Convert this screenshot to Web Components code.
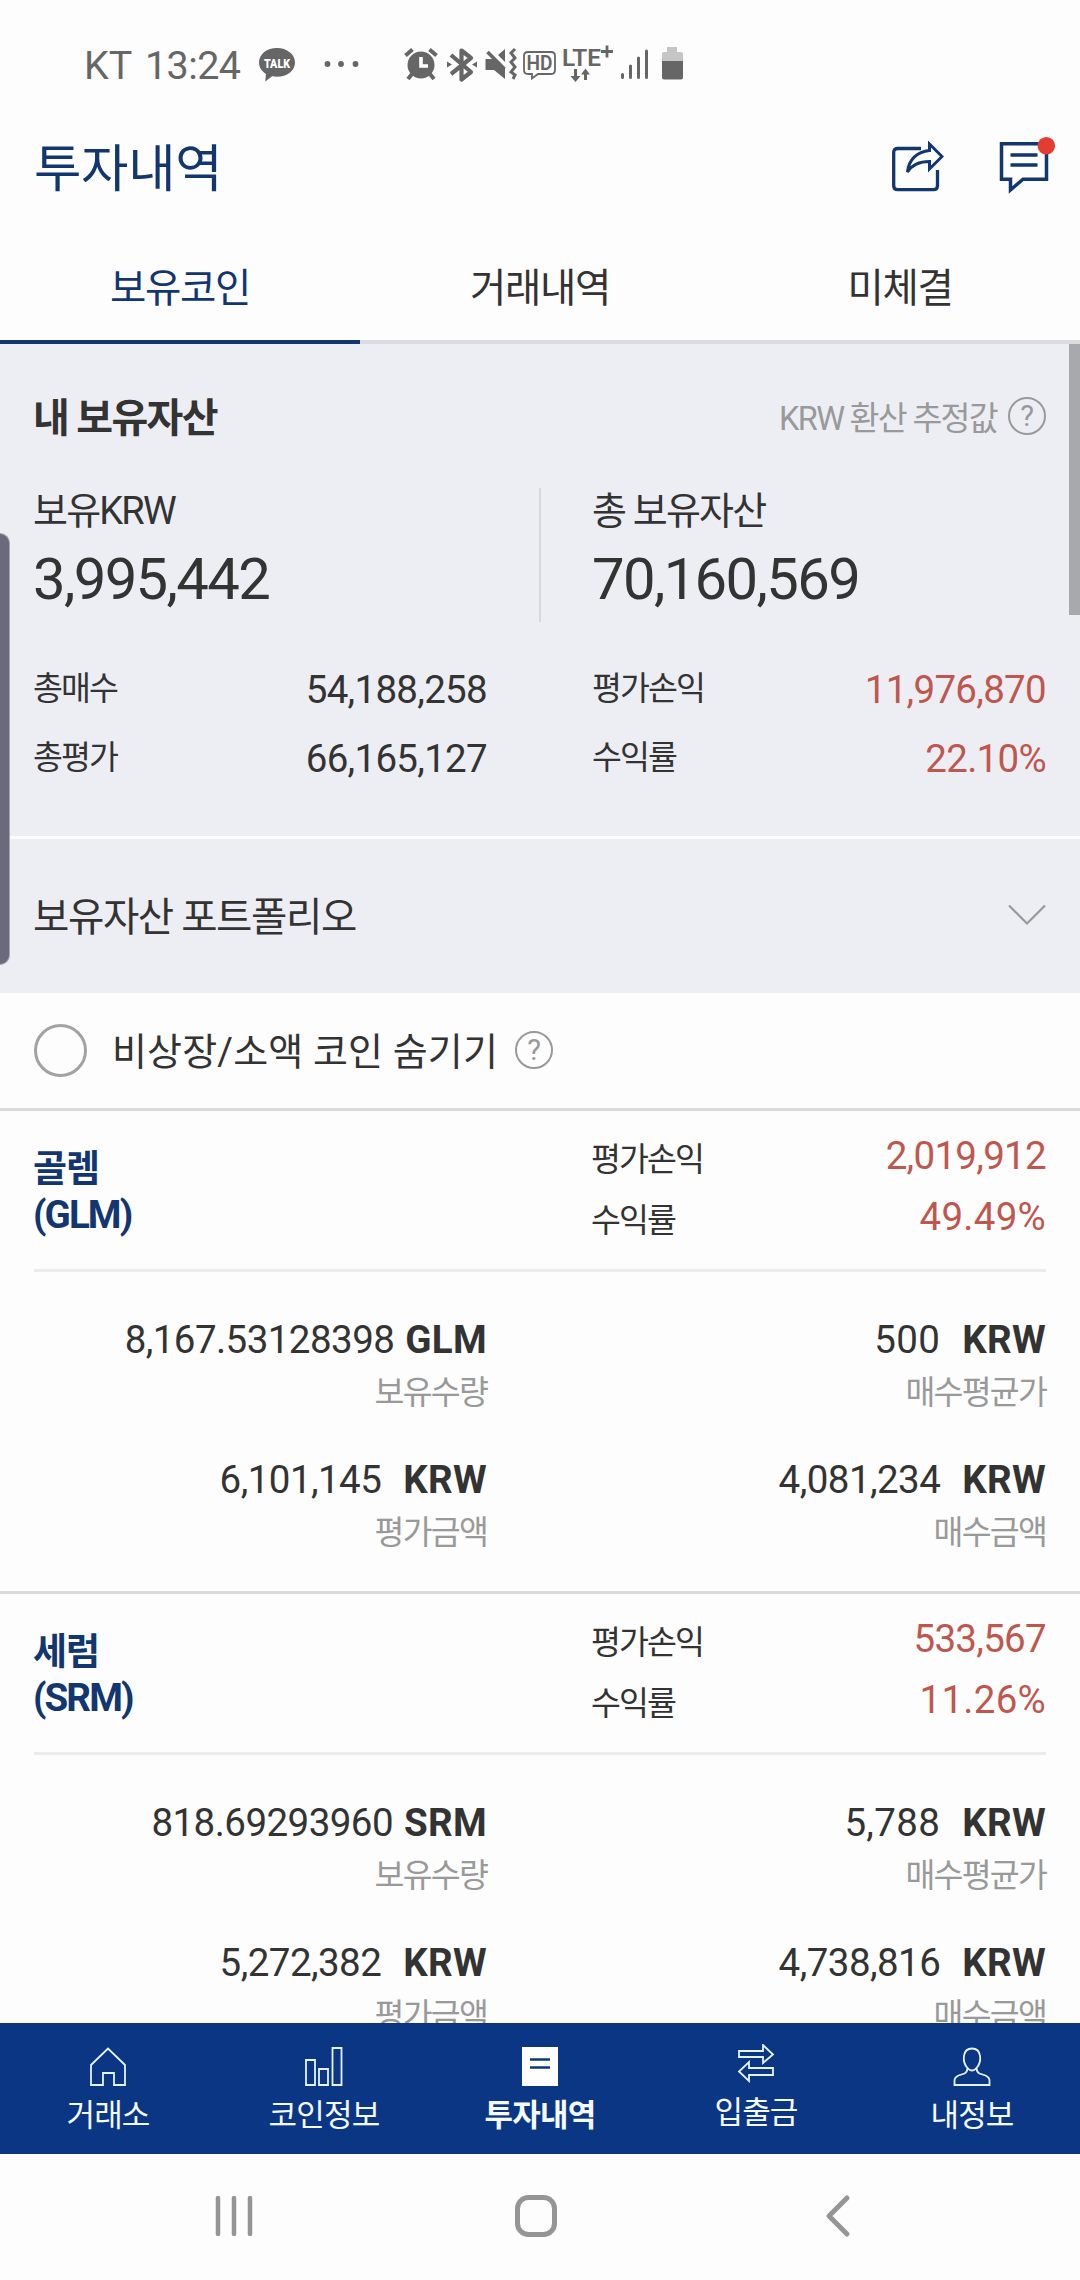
<!DOCTYPE html>
<html lang="ko">
<head>
<meta charset="UTF-8">
<title>투자내역</title>
<style>
    html, body {
        margin: 0;
        padding: 0;
    }

    body {
        width: 1080px;
        height: 2280px;
        overflow: hidden;
        background: #fdfdfd;
        color: #333;
        font-family: Roboto, "Noto Sans CJK KR", sans-serif;
        --navy: #12366f;
        --red: #c0574f;
        --gray: #999;
        --panel: #edeef4;
    }
</style>
</head>
<body>
<wallet-app></wallet-app>

<script>
// Base class: puts the markup of render() in an open shadow root
class BaseElement extends HTMLElement {
    constructor() {
        super();
        this.shadow = this.attachShadow({ mode: 'open' });
    }

    connectedCallback() {
        this.shadow.innerHTML = this.render();
    }
}

class StatusBar extends BaseElement {
    render() {
        return /*html*/ `
            <style>
                :host {
                    display: flex;
                    align-items: center;
                    height: 110px;
                    padding: 20px 0 0 84px;
                    box-sizing: border-box;
                    color: #666;
                    font-size: 39.5px;
                    line-height: 90px;
                }
                .carrier { width: 61px; margin-top: 2px; }
                .time { width: 113px; margin-top: 2px; letter-spacing: -0.6px; }
                svg { display: block; height: 40px; }
                .icons { font-family: Roboto, sans-serif; }
            </style>
            <span class="carrier">KT</span>
            <span class="time">13:24</span>
            <svg class="icons" width="432" height="40" viewBox="258 45 432 40" fill="#666">
                <!-- talk bubble -->
                <path d="M277 48c-10 0-18 6-18 14.5 0 5 3 9 7 11.500l-.8 7.500 7-5.200c1.500.3 3.200.5 4.800.5 10 0 18-6 18-14.300S287 48 277 48z"/>
                <text x="277" y="67.500" font-size="12.500" font-weight="900" fill="#fff" text-anchor="middle" textLength="26" lengthAdjust="spacingAndGlyphs">TALK</text>
                <circle cx="327.500" cy="64" r="2.900"/><circle cx="341" cy="64" r="2.900"/><circle cx="355.500" cy="64" r="2.900"/>
                <!-- alarm -->
                <circle cx="421" cy="65" r="13.500"/>
                <path d="M405.500 55.500l7-6M436.500 55.500l-7-6" fill="none" stroke="#666" stroke-width="4"/>
                <path d="M421 57v9h7" fill="none" stroke="#fff" stroke-width="3.600"/>
                <path d="M412 74l-4 5M430 74l4 5" stroke="#666" stroke-width="4"/>
                <!-- bluetooth -->
                <path d="M451 55l20 17-9.500 7.500V50.500l9.500 7.500-20 16" fill="none" stroke="#666" stroke-width="4.200" stroke-linejoin="round"/>
                <path d="M447 61.500l5 3-5 3zM477 61.500l-5 3 5 3z"/>
                <!-- muted speaker -->
                <path d="M485.500 59h8l11.500 9v11l-11-9h-8.500zM498 55l7-6v13z"/>
                <path d="M487.500 52l17 17" stroke="#666" stroke-width="3.500"/>
                <path d="M515 49l-4 4 4 5-4 4 4 5-4 5 4 3-2 4" fill="none" stroke="#666" stroke-width="3"/>
                <!-- HD voice -->
                <path d="M528 52h23q4 0 4 4v14q0 4-4 4h-13l-6 4.500v-4.500h-4q-4 0-4-4v-14q0-4 4-4z" fill="none" stroke="#666" stroke-width="1.800"/>
                <text x="539.500" y="70" font-size="20" font-weight="600" text-anchor="middle" textLength="26" lengthAdjust="spacingAndGlyphs">HD</text>
                <!-- LTE+ -->
                <text x="562" y="65.500" font-size="23.500" font-weight="600" textLength="39" lengthAdjust="spacingAndGlyphs">LTE</text>
                <path d="M601 51.500h12M607 45.500v12" stroke="#666" stroke-width="2.800"/>
                <path d="M574 69h3v7h3.500l-5 6-5-6h3.500zM584 80h3v-5.500h3l-4.500-6-4.500 6h3z"/>
                <!-- signal -->
                <path d="M622.500 74.500v3M630.500 66v11.500M638.500 58v19.500M646.500 51v26.500" stroke="#666" stroke-width="3" stroke-linecap="round"/>
                <!-- battery -->
                <path d="M667 47h10v5h4q2 0 2 2v8h-21v-8q0-2 2-2h3z" fill="#c5c5c5"/>
                <path d="M662 61h21v16.500q0 2-2 2h-17q-2 0-2-2z"/>
            </svg>
        `;
    }
}

class PageHeader extends BaseElement {
    render() {
        return /*html*/ `
            <style>
                :host {
                    display: flex;
                    align-items: center;
                    height: 118px;
                    padding: 0 22px 0 34px;
                    box-sizing: border-box;
                    color: var(--navy);
                }
                .title {
                    flex-grow: 1;
                    margin-top: 2px;
                    font-size: 51.5px;
                    line-height: 118px;
                    letter-spacing: -0.3px;
                }
                .share { margin: -4px 54px 0 0; }
                .chat { margin-top: -6px; }
            </style>
            <span class="title"><slot></slot></span>
            <svg class="share" width="52" height="52" viewBox="0 0 52 52" fill="none" stroke="#12366f" stroke-width="3.300">
                <path d="M29 7.500H5.700q-4 0-4 4v33.200q0 4 4 4h35.800q4 0 4-4V29"/>
                <path d="M37.500 3L50 15.500 37.500 28v-7.500C27.500 20.500 20.500 23 15.500 31 16.500 19 25 10.500 37.500 9.500z" stroke-width="3"/>
            </svg>
            <svg class="chat" width="60" height="60" viewBox="0 0 60 60" fill="none" stroke="#12366f" stroke-width="3.500">
                <path d="M3.500 7.700h45v35.500H25L12.500 54V43.200h-9zM12.500 19h27M12.500 29h27"/>
                <circle cx="48.300" cy="9.700" r="8.800" fill="#e53c32" stroke="none"/>
            </svg>
        `;
    }
}

class TabBar extends BaseElement {
    constructor() {
        super();
        this.tabs = ['보유코인', '거래내역', '미체결'];
    }

    render() {
        return /*html*/ `
            <style>
                :host {
                    display: flex;
                    height: 116px;
                }
                .tab {
                    flex: 1;
                    border-bottom: 4px solid #dcdce0;
                    text-align: center;
                    font-size: 39.5px;
                    line-height: 121px;
                    letter-spacing: -1.3px;
                }
                .active {
                    color: var(--navy);
                    border-color: var(--navy);
                }
            </style>
            ${this.tabs.map((tab, index) => `<div class="tab ${index === 0 ? 'active' : ''}">${tab}</div>`).join('')}
        `;
    }
}

class HelpIcon extends BaseElement {
    render() {
        return /*html*/ `
            <style>
                :host { display: block; width: 38px; height: 38px; }
                div {
                    box-sizing: border-box;
                    width: 38px;
                    height: 38px;
                    border: 2px solid #999;
                    border-radius: 50%;
                    color: #999;
                    font-size: 29px;
                    line-height: 35px;
                    text-align: center;
                    letter-spacing: 0;
                }
            </style>
            <div>?</div>
        `;
    }
}

class StatRow extends BaseElement {
    render() {
        const up = this.hasAttribute('up');
        return /*html*/ `
            <style>
                :host {
                    display: flex;
                    justify-content: space-between;
                    height: var(--row-height, 69px);
                    line-height: var(--row-height, 69px);
                }
                .label { font-size: 32.5px; letter-spacing: -1.9px; margin: 1px 0 0 -1px; }
                .value {
                    font-size: 38.5px;
                    letter-spacing: var(--value-spacing, -0.7px);
                    margin: var(--value-shift, 1px) 0 0 0;
                    color: ${up ? 'var(--red)' : 'inherit'};
                }
            </style>
            <span class="label">${this.getAttribute('label')}</span>
            <span class="value"><slot></slot></span>
        `;
    }
}

class AssetSummary extends BaseElement {
    render() {
        return /*html*/ `
            <style>
                :host {
                    display: block;
                    height: 492px;
                    padding: 44px 34px 0;
                    box-sizing: border-box;
                    background: var(--panel);
                }
                .head {
                    display: flex;
                    align-items: center;
                    height: 60px;
                    line-height: 60px;
                }
                .head b { flex-grow: 1; font-size: 40px; font-weight: 700; letter-spacing: -1.7px; margin: 2px 0 0 -1px; }
                .note { font-size: 32.5px; color: var(--gray); letter-spacing: -1.7px; margin: 1px 11px 0 0; }
                help-icon { margin-top: -4px; }
                .totals {
                    display: grid;
                    grid-template-columns: 506px 1fr;
                    height: 134px;
                    margin-top: 40px;
                }
                .total { margin-left: -1px; }
                .total + .total { border-left: 2px solid #d8d9de; padding-left: 51px; }
                .total span { display: block; font-size: 38px; line-height: 46px; letter-spacing: -1.8px; }
                .total strong { display: block; font-weight: 400; font-size: 58px; line-height: 70px; letter-spacing: -1.65px; margin-top: 10px; }
                .stats {
                    display: grid;
                    grid-template-columns: 453px 453px;
                    justify-content: space-between;
                    margin-top: 32px;
                }
            </style>
            <div class="head">
                <b>내 보유자산</b>
                <span class="note">KRW 환산 추정값</span>
                <help-icon></help-icon>
            </div>
            <div class="totals">
                <div class="total"><span>보유KRW</span><strong>3,995,442</strong></div>
                <div class="total"><span>총 보유자산</span><strong>70,160,569</strong></div>
            </div>
            <div class="stats">
                <stat-row label="총매수">54,188,258</stat-row>
                <stat-row label="평가손익" up>11,976,870</stat-row>
                <stat-row label="총평가">66,165,127</stat-row>
                <stat-row label="수익률" up>22.10%</stat-row>
            </div>
        `;
    }
}

class PortfolioToggle extends BaseElement {
    render() {
        return /*html*/ `
            <style>
                :host {
                    display: flex;
                    align-items: center;
                    justify-content: space-between;
                    height: 154px;
                    margin-top: 3px;
                    padding: 0 34px;
                    background: var(--panel);
                    font-size: 39.5px;
                    line-height: 154px;
                    letter-spacing: -1.4px;
                }
                span { margin: 3px 0 0 -1px; }
                svg { margin-top: -3px; }
            </style>
            <span><slot></slot></span>
            <svg width="38" height="22" viewBox="0 0 38 22" fill="none" stroke="#999" stroke-width="2.200">
                <path d="M1 1.500l18 18 18-18"/>
            </svg>
        `;
    }
}

class HideFilter extends BaseElement {
    render() {
        return /*html*/ `
            <style>
                :host {
                    display: flex;
                    align-items: center;
                    height: 115px;
                    padding-left: 34px;
                    border-bottom: 3px solid #dadada;
                    font-size: 38px;
                    line-height: 118px;
                }
                .radio {
                    width: 47px;
                    height: 47px;
                    border: 3px solid #a2a2a2;
                    border-radius: 50%;
                }
                .label { margin: 3px 17px 0 25px; letter-spacing: 0.15px; }
                .radio, help-icon { margin-top: -1px; }
            </style>
            <span class="radio"></span>
            <span class="label"><slot></slot></span>
            <help-icon></help-icon>
        `;
    }
}

class CoinCard extends BaseElement {
    render() {
        const get = name => this.getAttribute(name);
        const cells = [
            { value: get('amount'), unit: get('symbol'), label: '보유수량' },
            { value: get('average'), unit: 'KRW', label: '매수평균가', wide: true },
            { value: get('valuation'), unit: 'KRW', label: '평가금액' },
            { value: get('cost'), unit: 'KRW', label: '매수금액' },
        ];
        return /*html*/ `
            <style>
                :host {
                    display: block;
                    padding: 0 34px;
                    border-bottom: 3px solid #dadada;
                }
                .head {
                    display: grid;
                    grid-template-columns: 1fr 454px;
                    height: 158px;
                    border-bottom: 3px solid #ececec;
                }
                .name {
                    padding-top: 36px;
                    margin-left: -1px;
                    color: var(--navy);
                    font-size: 37px;
                    font-weight: 700;
                    line-height: 46px;
                    letter-spacing: -1.1px;
                }
                .name div + div { font-size: 38.5px; line-height: 44px; letter-spacing: -1.9px; }
                .profit { padding-top: 18px; --row-height: 61px; --value-shift: -4px; }
                .rate { --value-spacing: 0.25px; }
                .body {
                    display: grid;
                    grid-template-columns: 453px 1fr;
                    height: 276px;
                    padding-top: 43px;
                    grid-auto-rows: 140px;
                    text-align: right;
                }
                .value { font-size: 38.5px; line-height: 50px; letter-spacing: -0.55px; white-space: pre; }
                .value.wide { letter-spacing: 0.35px; }
                .value b { font-weight: 700; letter-spacing: 0.3px; margin-left: 22px; }
                .value b.coin { margin-left: 11px; }
                .label { font-size: 32.5px; line-height: 40px; margin-top: 8px; color: var(--gray); letter-spacing: -1.8px; }
            </style>
            <div class="head">
                <div class="name"><div>${get('name')}</div><div>(${get('symbol')})</div></div>
                <div class="profit">
                    <stat-row label="평가손익" up>${get('profit')}</stat-row>
                    <stat-row class="rate" label="수익률" up>${get('rate')}</stat-row>
                </div>
            </div>
            <div class="body">
                ${cells.map(cell => `
                    <div>
                        <div class="value ${cell.wide ? 'wide' : ''}">${cell.value}<b class="${cell.unit === 'KRW' ? '' : 'coin'}">${cell.unit}</b></div>
                        <div class="label">${cell.label}</div>
                    </div>
                `).join('')}
            </div>
        `;
    }
}

class BottomNav extends BaseElement {
    constructor() {
        super();
        this.items = [
            { title: '거래소', icon: '<path d="M2 38V18L19 1.500 36 18v20H25V26H14v12z"/>' },
            { title: '코인정보', icon: '<path d="M1 13h9v25H1zM14 22h9v16h-9zM27.500 1h9v37h-9z"/>' },
            { title: '투자내역', icon: '<path d="M1 0h36v39H1z" fill="#fff" stroke="none"/><path d="M9 12.500h20M9 20.500h20" stroke="#0a3684" stroke-width="2.500"/>', active: true },
            { title: '입출금', icon: '<path d="M2 7h24V1l10 9.500L26 19v-6H2zM36 24H12v-6L2 27.500 12 37v-6h24z"/>', shift: true },
            { title: '내정보', icon: '<path d="M14.500 21C9 15 9 1.500 19 1.500S29 15 23.500 21q0 4 3 5.500l6 2q4 2 4 5V38h-35v-4.500q0-3 4-5l6-2q3-1.500 3-5.500zM14.500 21q4.500 5 9 0"/>' },
        ];
    }

    render() {
        return /*html*/ `
            <style>
                :host {
                    display: flex;
                    height: 131px;
                    background: #0a3684;
                    color: #f4faff;
                    z-index: 1;
                }
                .item {
                    flex: 1;
                    display: flex;
                    flex-direction: column;
                    align-items: center;
                    padding-top: 24px;
                    font-size: 31px;
                    line-height: 44px;
                    letter-spacing: -0.8px;
                }
                .item span { margin-top: 8px; }
                .shift { padding-top: 21px; }
                .active { font-weight: 700; }
            </style>
            ${this.items.map(item => `
                <div class="item ${item.active ? 'active' : ''} ${item.shift ? 'shift' : ''}">
                    <svg width="38" height="39" viewBox="0 0 38 39" fill="none" stroke="#e6f3ff" stroke-width="1.800">${item.icon}</svg>
                    <span>${item.title}</span>
                </div>
            `).join('')}
        `;
    }
}

class SystemNav extends BaseElement {
    render() {
        return /*html*/ `
            <style>
                :host {
                    display: flex;
                    align-items: center;
                    height: 126px;
                    padding: 0 229px 0 214px;
                    box-sizing: border-box;
                    justify-content: space-between;
                }
                svg { display: block; margin-top: -2px; }
                .home { margin-right: 8px; }
            </style>
            <svg width="40" height="44" viewBox="0 0 40 44" stroke="#959595" stroke-width="4.500" stroke-linecap="round">
                <path d="M4 4v36M20 4v36M36 4v36"/>
            </svg>
            <svg class="home" width="44" height="44" viewBox="0 0 44 44" fill="none" stroke="#959595" stroke-width="5">
                <rect x="3.500" y="3.500" width="37" height="37" rx="11"/>
            </svg>
            <svg width="26" height="44" viewBox="0 0 26 44" fill="none" stroke="#959595" stroke-width="5" stroke-linecap="round" stroke-linejoin="round">
                <path d="M22 4L4 22l18 18"/>
            </svg>
        `;
    }
}

class WalletApp extends BaseElement {
    render() {
        return /*html*/ `
            <style>
                :host {
                    display: flex;
                    flex-direction: column;
                    width: 1080px;
                    height: 2280px;
                    position: relative;
                }
                main {
                    height: 1679px;
                    overflow: hidden;
                    position: relative;
                }
                /* scroll thumb and edge panel handle float over the page */
                .thumb {
                    position: absolute;
                    top: 0;
                    right: 0;
                    width: 11px;
                    height: 271px;
                    background: #a8a9ad;
                }
                .handle {
                    position: absolute;
                    left: 0;
                    top: 533px;
                    width: 9px;
                    height: 430px;
                    border: 1px solid #a5a5b0;
                    border-left: 0;
                    border-radius: 0 11px 11px 0;
                    background: #6b697c;
                }
            </style>
            <status-bar></status-bar>
            <page-header>투자내역</page-header>
            <tab-bar></tab-bar>
            <main>
                <asset-summary></asset-summary>
                <portfolio-toggle>보유자산 포트폴리오</portfolio-toggle>
                <hide-filter>비상장/소액 코인 숨기기</hide-filter>
                <coin-card name="골렘" symbol="GLM" profit="2,019,912" rate="49.49%"
                    amount="8,167.53128398" average="500" valuation="6,101,145" cost="4,081,234"></coin-card>
                <coin-card name="세럼" symbol="SRM" profit="533,567" rate="11.26%"
                    amount="818.69293960" average="5,788" valuation="5,272,382" cost="4,738,816"></coin-card>
                <div class="thumb"></div>
            </main>
            <bottom-nav></bottom-nav>
            <system-nav></system-nav>
            <div class="handle"></div>
        `;
    }
}

customElements.define('status-bar', StatusBar);
customElements.define('page-header', PageHeader);
customElements.define('tab-bar', TabBar);
customElements.define('help-icon', HelpIcon);
customElements.define('stat-row', StatRow);
customElements.define('asset-summary', AssetSummary);
customElements.define('portfolio-toggle', PortfolioToggle);
customElements.define('hide-filter', HideFilter);
customElements.define('coin-card', CoinCard);
customElements.define('bottom-nav', BottomNav);
customElements.define('system-nav', SystemNav);
customElements.define('wallet-app', WalletApp);
</script>
</body>
</html>
